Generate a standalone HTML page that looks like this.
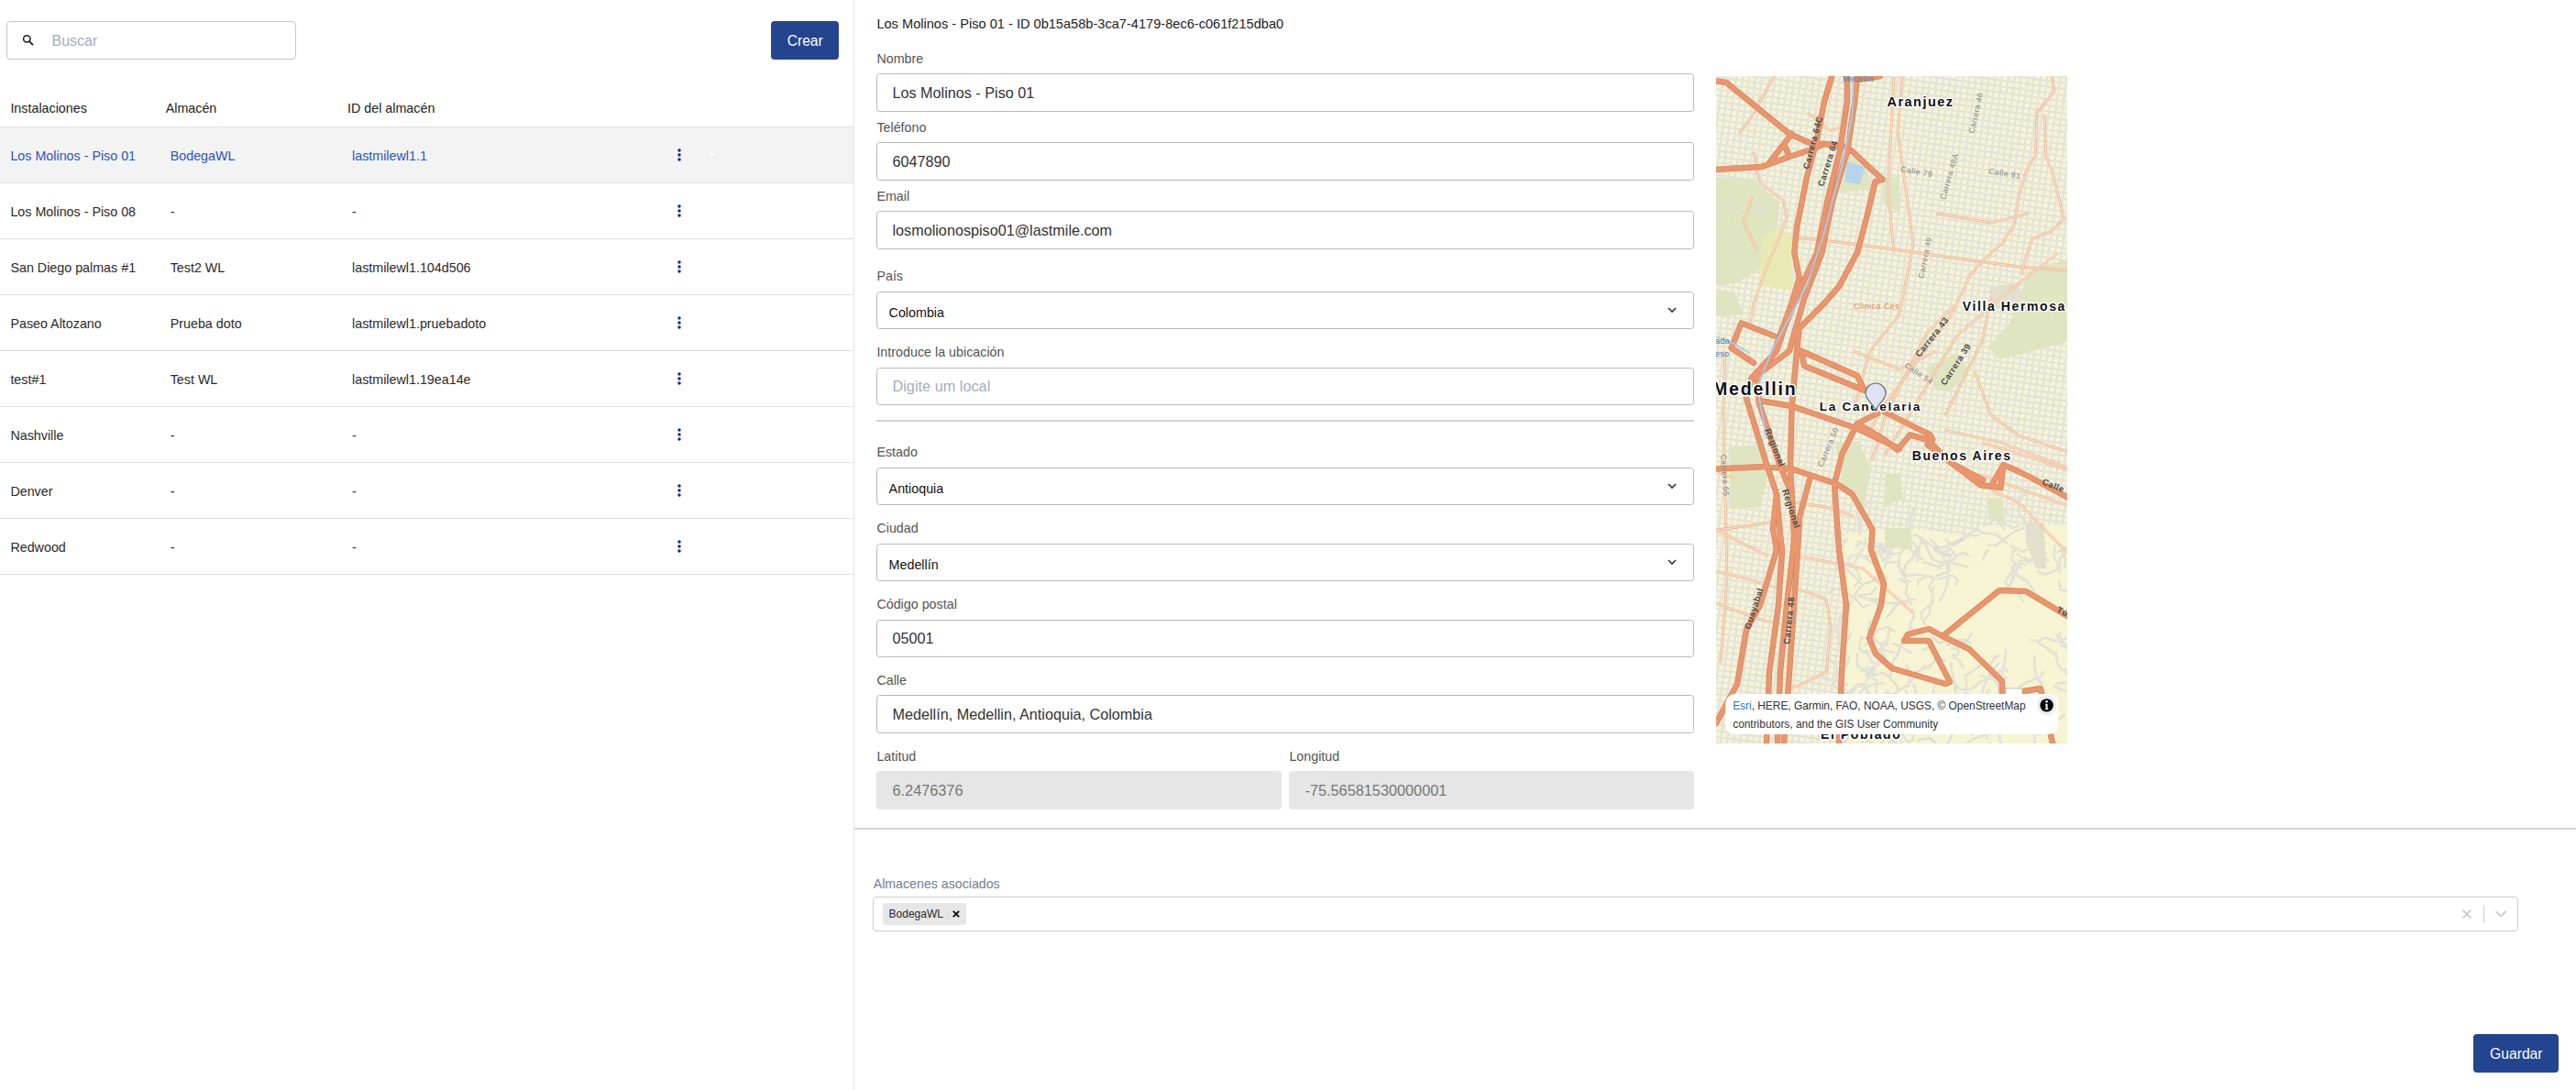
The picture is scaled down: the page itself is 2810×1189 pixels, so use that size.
<!DOCTYPE html>
<html><head><meta charset="utf-8"><style>
html,body{margin:0;padding:0;}
body{width:2810px;height:1189px;position:relative;overflow:hidden;background:#fff;font-family:"Liberation Sans", sans-serif;}
.t{position:absolute;white-space:nowrap;}
</style></head><body>
<div style="position:absolute;left:931px;top:0px;width:1px;height:1189px;background:#e4e4ec"></div>
<div style="position:absolute;left:7px;top:23px;width:316px;height:42px;box-sizing:border-box;border:1px solid #c6c6c6;border-radius:4px;background:#fff"></div>
<svg style="position:absolute;left:24px;top:37px" width="14" height="14" viewBox="0 0 14 14"><circle cx="5.3" cy="5.35" r="3.7" fill="none" stroke="#1a1d20" stroke-width="1.5"/><path d="M8.0 8.1 L11.6 11.6" stroke="#1a1d20" stroke-width="1.9" stroke-linecap="round"/></svg>
<div class="t" style="left:56.50px;top:36.65px;font-size:16px;line-height:16px;color:#a0aec0;font-weight:400;">Buscar</div>
<div style="position:absolute;left:841px;top:23px;width:74px;height:42px;background:#23448f;border-radius:4px"></div>
<div class="t" style="left:858.70px;top:37.19px;font-size:15.6px;line-height:15.6px;color:#ffffff;font-weight:400;">Crear</div>
<div class="t" style="left:11.40px;top:111.39px;font-size:14.3px;line-height:14.3px;color:#222222;font-weight:400;">Instalaciones</div>
<div class="t" style="left:180.70px;top:111.39px;font-size:14.3px;line-height:14.3px;color:#222222;font-weight:400;">Almacén</div>
<div class="t" style="left:379.00px;top:111.39px;font-size:14.3px;line-height:14.3px;color:#222222;font-weight:400;">ID del almacén</div>
<div style="position:absolute;left:0px;top:138px;width:931px;height:1px;background:#e0e0e0"></div>
<div style="position:absolute;left:0px;top:139px;width:931px;height:60px;background:#f3f3f3"></div>
<div class="t" style="left:11.40px;top:163.09px;font-size:14.3px;line-height:14.3px;color:#2a55b8;font-weight:400;">Los Molinos - Piso 01</div>
<div class="t" style="left:185.70px;top:163.09px;font-size:14.3px;line-height:14.3px;color:#2a55b8;font-weight:400;">BodegaWL</div>
<div class="t" style="left:384.00px;top:163.09px;font-size:14.3px;line-height:14.3px;color:#2a55b8;font-weight:400;">lastmilewl1.1</div>
<div style="position:absolute;left:0px;top:199px;width:931px;height:1px;background:#e0e0e0"></div>
<svg style="position:absolute;left:738px;top:161px" width="6" height="16" viewBox="0 0 6 16"><circle cx="3" cy="3" r="1.75" fill="#0e2c7e"/><circle cx="3" cy="8" r="1.75" fill="#0e2c7e"/><circle cx="3" cy="13" r="1.75" fill="#0e2c7e"/></svg>
<div class="t" style="left:11.40px;top:224.09px;font-size:14.3px;line-height:14.3px;color:#2a2a2a;font-weight:400;">Los Molinos - Piso 08</div>
<div class="t" style="left:185.70px;top:224.09px;font-size:14.3px;line-height:14.3px;color:#2a2a2a;font-weight:400;">-</div>
<div class="t" style="left:384.00px;top:224.09px;font-size:14.3px;line-height:14.3px;color:#2a2a2a;font-weight:400;">-</div>
<div style="position:absolute;left:0px;top:260px;width:931px;height:1px;background:#e0e0e0"></div>
<svg style="position:absolute;left:738px;top:222px" width="6" height="16" viewBox="0 0 6 16"><circle cx="3" cy="3" r="1.75" fill="#0e2c7e"/><circle cx="3" cy="8" r="1.75" fill="#0e2c7e"/><circle cx="3" cy="13" r="1.75" fill="#0e2c7e"/></svg>
<div class="t" style="left:11.40px;top:285.09px;font-size:14.3px;line-height:14.3px;color:#2a2a2a;font-weight:400;">San Diego palmas #1</div>
<div class="t" style="left:185.70px;top:285.09px;font-size:14.3px;line-height:14.3px;color:#2a2a2a;font-weight:400;">Test2 WL</div>
<div class="t" style="left:384.00px;top:285.09px;font-size:14.3px;line-height:14.3px;color:#2a2a2a;font-weight:400;">lastmilewl1.104d506</div>
<div style="position:absolute;left:0px;top:321px;width:931px;height:1px;background:#e0e0e0"></div>
<svg style="position:absolute;left:738px;top:283px" width="6" height="16" viewBox="0 0 6 16"><circle cx="3" cy="3" r="1.75" fill="#0e2c7e"/><circle cx="3" cy="8" r="1.75" fill="#0e2c7e"/><circle cx="3" cy="13" r="1.75" fill="#0e2c7e"/></svg>
<div class="t" style="left:11.40px;top:346.09px;font-size:14.3px;line-height:14.3px;color:#2a2a2a;font-weight:400;">Paseo Altozano</div>
<div class="t" style="left:185.70px;top:346.09px;font-size:14.3px;line-height:14.3px;color:#2a2a2a;font-weight:400;">Prueba doto</div>
<div class="t" style="left:384.00px;top:346.09px;font-size:14.3px;line-height:14.3px;color:#2a2a2a;font-weight:400;">lastmilewl1.pruebadoto</div>
<div style="position:absolute;left:0px;top:382px;width:931px;height:1px;background:#e0e0e0"></div>
<svg style="position:absolute;left:738px;top:344px" width="6" height="16" viewBox="0 0 6 16"><circle cx="3" cy="3" r="1.75" fill="#0e2c7e"/><circle cx="3" cy="8" r="1.75" fill="#0e2c7e"/><circle cx="3" cy="13" r="1.75" fill="#0e2c7e"/></svg>
<div class="t" style="left:11.40px;top:407.09px;font-size:14.3px;line-height:14.3px;color:#2a2a2a;font-weight:400;">test#1</div>
<div class="t" style="left:185.70px;top:407.09px;font-size:14.3px;line-height:14.3px;color:#2a2a2a;font-weight:400;">Test WL</div>
<div class="t" style="left:384.00px;top:407.09px;font-size:14.3px;line-height:14.3px;color:#2a2a2a;font-weight:400;">lastmilewl1.19ea14e</div>
<div style="position:absolute;left:0px;top:443px;width:931px;height:1px;background:#e0e0e0"></div>
<svg style="position:absolute;left:738px;top:405px" width="6" height="16" viewBox="0 0 6 16"><circle cx="3" cy="3" r="1.75" fill="#0e2c7e"/><circle cx="3" cy="8" r="1.75" fill="#0e2c7e"/><circle cx="3" cy="13" r="1.75" fill="#0e2c7e"/></svg>
<div class="t" style="left:11.40px;top:468.09px;font-size:14.3px;line-height:14.3px;color:#2a2a2a;font-weight:400;">Nashville</div>
<div class="t" style="left:185.70px;top:468.09px;font-size:14.3px;line-height:14.3px;color:#2a2a2a;font-weight:400;">-</div>
<div class="t" style="left:384.00px;top:468.09px;font-size:14.3px;line-height:14.3px;color:#2a2a2a;font-weight:400;">-</div>
<div style="position:absolute;left:0px;top:504px;width:931px;height:1px;background:#e0e0e0"></div>
<svg style="position:absolute;left:738px;top:466px" width="6" height="16" viewBox="0 0 6 16"><circle cx="3" cy="3" r="1.75" fill="#0e2c7e"/><circle cx="3" cy="8" r="1.75" fill="#0e2c7e"/><circle cx="3" cy="13" r="1.75" fill="#0e2c7e"/></svg>
<div class="t" style="left:11.40px;top:529.09px;font-size:14.3px;line-height:14.3px;color:#2a2a2a;font-weight:400;">Denver</div>
<div class="t" style="left:185.70px;top:529.09px;font-size:14.3px;line-height:14.3px;color:#2a2a2a;font-weight:400;">-</div>
<div class="t" style="left:384.00px;top:529.09px;font-size:14.3px;line-height:14.3px;color:#2a2a2a;font-weight:400;">-</div>
<div style="position:absolute;left:0px;top:565px;width:931px;height:1px;background:#e0e0e0"></div>
<svg style="position:absolute;left:738px;top:527px" width="6" height="16" viewBox="0 0 6 16"><circle cx="3" cy="3" r="1.75" fill="#0e2c7e"/><circle cx="3" cy="8" r="1.75" fill="#0e2c7e"/><circle cx="3" cy="13" r="1.75" fill="#0e2c7e"/></svg>
<div class="t" style="left:11.40px;top:590.09px;font-size:14.3px;line-height:14.3px;color:#2a2a2a;font-weight:400;">Redwood</div>
<div class="t" style="left:185.70px;top:590.09px;font-size:14.3px;line-height:14.3px;color:#2a2a2a;font-weight:400;">-</div>
<div class="t" style="left:384.00px;top:590.09px;font-size:14.3px;line-height:14.3px;color:#2a2a2a;font-weight:400;">-</div>
<div style="position:absolute;left:0px;top:626px;width:931px;height:1px;background:#e0e0e0"></div>
<svg style="position:absolute;left:738px;top:588px" width="6" height="16" viewBox="0 0 6 16"><circle cx="3" cy="3" r="1.75" fill="#0e2c7e"/><circle cx="3" cy="8" r="1.75" fill="#0e2c7e"/><circle cx="3" cy="13" r="1.75" fill="#0e2c7e"/></svg>
<svg style="position:absolute;left:772px;top:166px" width="10" height="6" viewBox="0 0 10 6"><path d="M0.8 1 L9 1 L4.9 5.2 Z" fill="#ffffff"/></svg>
<div class="t" style="left:956.40px;top:18.64px;font-size:14.6px;line-height:14.6px;color:#222222;font-weight:400;">Los Molinos - Piso 01 - ID 0b15a58b-3ca7-4179-8ec6-c061f215dba0</div>
<div class="t" style="left:956.40px;top:57.19px;font-size:14.3px;line-height:14.3px;color:#545454;font-weight:400;">Nombre</div>
<div style="position:absolute;left:956px;top:80.3px;width:892px;height:41.5px;box-sizing:border-box;border:1px solid #b9b9b9;border-radius:3.5px;background:#fff"></div>
<div class="t" style="left:973.50px;top:93.18px;font-size:16.2px;line-height:16.2px;color:#333333;font-weight:400;">Los Molinos - Piso 01</div>
<div class="t" style="left:956.40px;top:132.39px;font-size:14.3px;line-height:14.3px;color:#545454;font-weight:400;">Teléfono</div>
<div style="position:absolute;left:956px;top:155.3px;width:892px;height:41.5px;box-sizing:border-box;border:1px solid #b9b9b9;border-radius:3.5px;background:#fff"></div>
<div class="t" style="left:973.50px;top:168.18px;font-size:16.2px;line-height:16.2px;color:#333333;font-weight:400;">6047890</div>
<div class="t" style="left:956.40px;top:206.89px;font-size:14.3px;line-height:14.3px;color:#545454;font-weight:400;">Email</div>
<div style="position:absolute;left:956px;top:230.3px;width:892px;height:41.5px;box-sizing:border-box;border:1px solid #b9b9b9;border-radius:3.5px;background:#fff"></div>
<div class="t" style="left:973.50px;top:243.18px;font-size:16.2px;line-height:16.2px;color:#333333;font-weight:400;">losmolionospiso01@lastmile.com</div>
<div class="t" style="left:956.40px;top:293.89px;font-size:14.3px;line-height:14.3px;color:#545454;font-weight:400;">País</div>
<div style="position:absolute;left:956px;top:317.5px;width:892px;height:41.5px;box-sizing:border-box;border:1px solid #b9b9b9;border-radius:3.5px;background:#fff"></div>
<div class="t" style="left:969.60px;top:334.49px;font-size:14.3px;line-height:14.3px;color:#111111;font-weight:400;">Colombia</div>
<svg style="position:absolute;left:1818px;top:333.5px" width="12" height="8" viewBox="0 0 12 8"><path d="M2 2 L6 6 L10 2" fill="none" stroke="#333" stroke-width="1.6"/></svg>
<div class="t" style="left:956.40px;top:377.29px;font-size:14.3px;line-height:14.3px;color:#545454;font-weight:400;">Introduce la ubicación</div>
<div style="position:absolute;left:956px;top:400.6px;width:892px;height:41.5px;box-sizing:border-box;border:1px solid #b9b9b9;border-radius:3.5px;background:#fff"></div>
<div class="t" style="left:973.50px;top:413.40px;font-size:16.3px;line-height:16.3px;color:#a0aec0;font-weight:400;">Digite um local</div>
<div style="position:absolute;left:956px;top:458px;width:892px;height:2px;background:#d3d3d3"></div>
<div class="t" style="left:956.40px;top:486.29px;font-size:14.3px;line-height:14.3px;color:#545454;font-weight:400;">Estado</div>
<div style="position:absolute;left:956px;top:509.5px;width:892px;height:41.5px;box-sizing:border-box;border:1px solid #b9b9b9;border-radius:3.5px;background:#fff"></div>
<div class="t" style="left:969.60px;top:526.49px;font-size:14.3px;line-height:14.3px;color:#111111;font-weight:400;">Antioquia</div>
<svg style="position:absolute;left:1818px;top:525.5px" width="12" height="8" viewBox="0 0 12 8"><path d="M2 2 L6 6 L10 2" fill="none" stroke="#333" stroke-width="1.6"/></svg>
<div class="t" style="left:956.40px;top:569.19px;font-size:14.3px;line-height:14.3px;color:#545454;font-weight:400;">Ciudad</div>
<div style="position:absolute;left:956px;top:592.5px;width:892px;height:41.5px;box-sizing:border-box;border:1px solid #b9b9b9;border-radius:3.5px;background:#fff"></div>
<div class="t" style="left:969.60px;top:609.49px;font-size:14.3px;line-height:14.3px;color:#111111;font-weight:400;">Medellín</div>
<svg style="position:absolute;left:1818px;top:608.5px" width="12" height="8" viewBox="0 0 12 8"><path d="M2 2 L6 6 L10 2" fill="none" stroke="#333" stroke-width="1.6"/></svg>
<div class="t" style="left:956.40px;top:652.19px;font-size:14.3px;line-height:14.3px;color:#545454;font-weight:400;">Código postal</div>
<div style="position:absolute;left:956px;top:675.5px;width:892px;height:41.5px;box-sizing:border-box;border:1px solid #b9b9b9;border-radius:3.5px;background:#fff"></div>
<div class="t" style="left:973.50px;top:688.38px;font-size:16.2px;line-height:16.2px;color:#333333;font-weight:400;">05001</div>
<div class="t" style="left:956.40px;top:735.09px;font-size:14.3px;line-height:14.3px;color:#545454;font-weight:400;">Calle</div>
<div style="position:absolute;left:956px;top:758.4px;width:892px;height:41.5px;box-sizing:border-box;border:1px solid #b9b9b9;border-radius:3.5px;background:#fff"></div>
<div class="t" style="left:973.50px;top:771.28px;font-size:16.2px;line-height:16.2px;color:#333333;font-weight:400;">Medellín, Medellin, Antioquia, Colombia</div>
<div class="t" style="left:956.40px;top:817.89px;font-size:14.3px;line-height:14.3px;color:#545454;font-weight:400;">Latitud</div>
<div style="position:absolute;left:956px;top:841.3px;width:442px;height:41.5px;background:#e6e6e6;border-radius:4px"></div>
<div class="t" style="left:973.50px;top:854.10px;font-size:16.3px;line-height:16.3px;color:#767676;font-weight:400;">6.2476376</div>
<div class="t" style="left:1406.40px;top:817.89px;font-size:14.3px;line-height:14.3px;color:#545454;font-weight:400;">Longitud</div>
<div style="position:absolute;left:1406px;top:841.3px;width:442px;height:41.5px;background:#e6e6e6;border-radius:4px"></div>
<div class="t" style="left:1423.50px;top:854.10px;font-size:16.3px;line-height:16.3px;color:#767676;font-weight:400;">-75.56581530000001</div>
<div style="position:absolute;left:932px;top:903px;width:1878px;height:2px;background:#d2d2d2"></div>
<svg style="position:absolute;left:1872px;top:83px" width="383" height="728" viewBox="0 0 383 728">
<defs>
<pattern id="grid" width="7" height="6.6" patternUnits="userSpaceOnUse" patternTransform="rotate(8)">
<path d="M0 1 H7 M1 0 V6.6" stroke="#d8d8d0" stroke-width="2.0" fill="none"/>
<path d="M0 1 H7 M1 0 V6.6" stroke="#ecebe4" stroke-width="0.9" fill="none"/>
</pattern>
<pattern id="gridb" width="9" height="7.5" patternUnits="userSpaceOnUse" patternTransform="rotate(-28)">
<path d="M0 1 H9 M1 0 V7.5" stroke="#d6d5cc" stroke-width="2.1" fill="none"/>
<path d="M0 1 H9 M1 0 V7.5" stroke="#efeee7" stroke-width="0.8" fill="none"/>
</pattern>
<clipPath id="mc"><rect x="0" y="0" width="383" height="728"/></clipPath>
</defs>
<g clip-path="url(#mc)">
<rect x="0" y="0" width="383" height="728" fill="#f6f4d3"/>
<rect x="0" y="0" width="383" height="728" fill="url(#grid)"/>
<polygon points="140.0,500.0 200.0,492.0 260.0,500.0 300.0,490.0 383.0,490.0 383.0,728.0 140.0,728.0" fill="#f6f4d3"/>
<path d="M218.7 525.9 L219.7 519.0 L224.9 504.8 M192.2 510.5 L191.4 520.7 L185.9 525.4 L183.6 537.4 M370.3 627.4 L372.7 641.7 L377.3 647.6 L386.4 647.4 M338.3 533.0 L327.1 530.7 L322.7 535.6 L322.4 548.4 M212.8 679.1 L204.1 676.9 L194.9 674.7 L182.9 673.3 M157.8 611.8 L168.5 614.0 L176.3 604.0 L187.6 600.9 L195.0 606.3 M309.0 631.5 L303.0 635.0 L296.9 646.5 L304.0 657.7 L314.0 664.0 L319.7 672.7 M314.1 701.1 L311.0 712.8 L309.0 720.7 L312.5 733.7 L319.8 746.9 L323.6 753.6 M237.6 556.1 L236.2 564.8 L236.6 574.4 L224.5 584.3 L224.2 592.0 L228.9 598.9 M257.8 630.2 L265.7 638.4 L270.2 646.4 M170.5 694.5 L183.9 688.5 L194.0 696.5 M235.8 604.6 L236.5 612.7 L243.9 618.5 L249.4 616.1 M176.8 514.1 L179.3 521.8 L186.4 531.9 M372.2 633.3 L359.7 623.4 L350.8 617.3 M160.9 514.3 L154.3 525.5 L150.0 532.2 L140.4 531.4 L127.4 523.6 M296.2 511.7 L305.8 511.7 L314.8 504.8 L324.7 497.3 L337.6 492.2 M324.3 536.4 L320.2 543.7 L315.2 551.8 L318.7 557.1 L326.4 560.9 L335.7 573.3 M248.7 713.0 L252.0 706.8 L255.8 698.2 L261.6 683.5 L265.2 678.7 M296.3 688.6 L298.2 702.0 L299.7 709.7 L295.2 717.8 L280.4 723.2 L272.1 728.8 M370.1 662.5 L382.0 661.7 L394.4 659.9 L406.2 661.3 M255.3 713.1 L269.1 710.8 L275.6 713.3 L279.8 719.4 M379.7 536.4 L381.4 527.6 L376.3 516.8 M171.9 706.6 L159.6 713.7 L147.0 720.4 L140.4 717.4 L130.2 721.9 L118.0 715.6 M287.9 674.7 L296.3 684.9 L301.2 692.7 L306.9 702.8 M330.6 515.3 L324.6 517.5 L322.0 527.7 L333.6 537.1 M155.4 567.5 L165.5 570.6 L175.5 574.5 L177.3 587.4 M353.0 714.2 L347.3 719.0 L347.7 729.4 L355.0 733.5 M157.8 649.3 L169.6 645.6 L176.6 640.6 L177.4 630.0 M321.4 512.4 L334.3 518.7 L344.0 515.0 L352.9 512.1 M315.5 494.6 L308.8 487.4 L303.0 480.6 L305.8 474.0 L314.0 472.7 L319.1 477.3 M206.1 705.6 L201.3 719.3 L190.6 730.5 L184.8 740.3 M219.5 556.4 L220.4 549.8 L231.8 545.1 L238.2 547.4 M348.1 505.9 L340.9 491.6 L331.6 479.6 L329.3 473.6 L331.4 458.4 L339.6 455.8 M184.0 711.9 L173.5 708.6 L165.1 712.9 L165.5 721.3 M143.7 664.5 L135.8 661.5 L123.5 658.7 L113.1 651.7 M272.7 701.5 L287.9 705.6 L302.2 704.0 L313.6 708.6 L323.0 710.1 M153.2 520.9 L159.5 522.7 L167.2 528.8 L179.3 538.8 L187.1 549.1 M151.0 534.1 L157.8 548.2 L150.5 557.1 M199.4 719.8 L202.9 728.5 L211.6 730.1 L218.8 734.6 L221.1 741.1 M338.5 524.2 L331.1 529.4 L327.3 540.6 L322.0 553.0 L312.8 562.4 L302.9 561.3 M219.3 724.4 L233.4 722.1 L242.1 730.8 L245.3 744.6 M173.9 614.7 L165.7 606.1 L168.0 593.5 M147.6 521.7 L143.5 531.4 L147.4 536.2 M157.0 711.9 L163.5 710.2 L171.6 712.8 M158.1 553.2 L149.3 544.3 L138.3 535.0 L123.9 539.7 M209.8 501.1 L202.5 502.5 L192.8 511.8 L189.0 522.9 M143.0 504.4 L136.0 515.1 L135.2 526.2 M168.8 702.7 L164.7 707.3 L156.3 718.8 M205.3 539.9 L206.7 533.2 L212.9 527.2 L218.3 516.4 M167.4 576.9 L160.1 578.9 L151.2 569.6 L140.2 562.3 L131.1 558.6 L123.1 563.3 M218.9 570.5 L204.0 572.4 L196.1 578.2 L186.1 590.6 M151.7 514.2 L157.4 509.3 L166.9 513.5 L180.6 513.1 L188.7 519.4 M147.0 671.3 L140.6 671.9 L131.2 667.3 L125.1 656.4 M209.5 501.7 L212.7 492.0 L211.0 483.6 L215.5 472.0 M238.7 546.8 L232.2 557.4 L237.1 567.2 L233.9 578.3 L232.4 587.5 L225.1 594.7 M182.5 622.3 L184.1 633.9 L174.6 643.4 L169.1 651.9 L163.3 659.8 M222.2 504.8 L229.5 513.0 L235.4 526.4 L243.1 530.4 L253.0 529.1 M248.3 717.0 L245.6 707.2 L250.5 694.0 M375.3 606.6 L375.1 615.1 L381.1 619.7 L390.8 628.0 L388.2 641.0 L381.1 652.6 M251.1 621.3 L265.2 615.4 L274.2 615.0 L279.2 608.2 M294.6 656.3 L309.7 659.7 L317.2 655.5 M332.1 490.3 L323.3 492.9 L316.0 488.8 L306.4 482.5 L297.8 487.7 L291.4 489.0 M187.2 700.6 L175.2 696.3 L173.5 688.3 M148.3 570.5 L143.5 583.6 L134.7 590.3 L131.4 605.6 L134.8 619.4 L141.1 624.6 M371.3 608.0 L377.6 621.7 L389.5 622.6 L392.6 628.4 M145.7 631.9 L142.8 642.0 L136.3 648.4 M167.5 508.9 L182.2 513.2 L186.3 518.1 L189.2 527.4 M372.2 519.4 L384.1 512.7 L392.0 501.1 L387.1 489.1 M187.6 618.9 L175.8 628.1 L178.0 638.0 L171.1 649.8 L174.5 655.1 M155.2 709.0 L147.3 714.0 L140.5 728.0 M323.6 708.1 L315.7 710.6 L301.1 716.1 M259.9 710.9 L255.2 723.8 L249.8 731.4 L248.1 740.8 L243.0 745.3 M187.9 669.2 L184.3 679.4 L181.0 686.2 M243.7 515.0 L253.6 512.6 L263.0 525.1 M182.1 521.6 L168.5 516.7 L163.2 511.8 L163.1 502.9 M200.1 548.4 L208.6 553.6 L206.9 564.5 L213.5 577.0 M298.8 725.8 L298.8 734.2 L300.1 743.8 L294.3 749.8 L298.0 761.2 L294.3 768.3 M158.3 612.0 L155.7 624.4 L165.9 631.3 L170.3 639.7 L179.7 639.6 M150.7 728.0 L158.5 739.9 L165.4 746.7 L168.6 752.6 M147.6 608.0 L142.8 616.6 L135.5 626.6 L138.1 633.8 L136.9 643.8 L140.4 652.2 M241.2 695.7 L250.6 698.9 L265.9 700.4 L273.5 699.9 L277.3 694.1 M327.9 520.9 L339.8 530.2 L351.3 526.3 L360.2 519.8 M175.5 557.4 L167.9 565.3 L152.3 566.5 M188.0 520.1 L196.3 511.5 L202.4 508.3 L215.3 508.8 L222.3 519.0 L219.2 530.8 M254.9 624.6 L262.2 624.4 L272.9 616.7 L279.0 618.8 M276.6 670.3 L286.0 662.8 L296.4 656.3 L301.7 647.6 L308.7 640.0 M197.2 671.7 L209.0 664.1 L213.6 659.2 L217.5 650.4 L227.5 645.8 L233.9 645.5 M171.7 709.5 L178.5 718.1 L191.2 727.0 M173.1 694.0 L184.6 683.1 L195.6 672.2 M362.6 529.3 L355.8 522.7 L354.4 515.2 L360.4 508.9 M338.2 524.2 L331.5 529.6 L324.3 535.4 L326.0 543.0 L339.1 551.0 L347.5 563.4 M181.0 676.8 L185.8 685.1 L181.6 695.9 M281.0 700.0 L284.2 709.2 L290.0 717.0 L299.3 717.7 L304.3 711.1 L316.7 701.7 M212.0 612.8 L201.2 620.8 L198.8 629.4 L193.3 638.0 L191.7 644.3 M258.7 635.8 L264.6 628.3 L261.9 619.1 M194.5 628.9 L180.6 625.5 L175.5 628.9 L162.5 627.0 M249.6 505.2 L256.3 510.5 L267.2 504.6 L276.2 501.3 L286.6 501.3 M367.7 664.6 L377.8 669.7 L386.0 671.7 M154.2 675.4 L159.9 669.7 L169.5 664.2 L183.4 661.7 M213.0 501.5 L218.9 500.5 L229.7 508.6 L241.0 515.8 L248.4 519.4 L255.7 515.4 M149.4 569.9 L153.6 562.3 L159.8 553.9 L170.7 551.2 L179.3 542.3 M374.5 541.6 L374.9 526.6 L380.9 521.3 M178.7 707.8 L184.6 713.7 L182.1 725.8 L174.3 735.8 L163.9 733.2 L157.6 721.9 M316.1 625.7 L314.9 637.5 L312.9 645.0 L318.3 649.6 M291.1 528.5 L293.3 521.5 L297.2 516.3 M156.5 501.1 L155.7 485.6 L156.0 473.0 L167.0 465.0 L176.7 463.7 M199.9 538.4 L206.6 548.7 L212.8 551.9 M163.8 670.3 L169.2 677.0 L182.3 684.8 L193.9 677.8 L206.3 683.6 M209.9 667.5 L211.2 653.8 L207.6 641.2 M349.5 511.6 L352.7 500.8 L349.7 487.7 L340.6 485.1 M163.3 655.5 L173.2 643.5 L181.1 634.7 L179.9 620.6 L186.7 615.9 L189.2 600.7 M380.8 623.6 L390.4 626.6 L405.3 627.5 L414.1 615.5 L410.2 608.5 M204.0 704.5 L199.1 693.2 L203.6 687.4 L213.5 679.3 L219.3 676.6 L230.2 674.0 M252.5 654.0 L260.5 661.0 L259.9 669.3 L265.5 676.4 M310.9 690.8 L304.1 702.1 L297.3 708.8 L295.0 724.2 M202.9 717.3 L206.2 723.5 L217.2 734.8 L218.1 748.1 M245.7 536.7 L231.7 531.7 L225.8 530.2 M194.1 723.4 L200.5 733.6 L210.1 743.0 M279.5 668.3 L267.0 669.4 L258.5 660.4 L254.1 653.4 M184.1 519.6 L177.2 520.4 L164.0 524.6 L152.0 522.1 L142.5 526.1 M250.6 637.9 L242.0 634.5 L232.0 644.8 L225.0 643.5 M201.0 541.9 L199.9 534.9 L200.0 523.5 L205.7 514.0 M295.3 687.3 L287.4 680.4 L289.9 672.9 L295.2 658.6 L304.8 651.1 L312.8 648.3 M232.8 504.6 L241.8 513.6 L245.8 519.5 L254.6 524.3 L254.3 540.0 L239.7 545.6 M252.3 529.2 L264.1 532.8 L275.4 535.4 M194.9 719.4 L190.1 726.9 L185.5 732.5 L176.0 733.3 L169.7 727.3 L162.0 723.5 M243.5 534.2 L255.4 530.2 L263.3 522.8 L269.5 519.8 L276.1 523.3 M213.7 581.7 L216.2 588.6 L211.0 599.8 L215.0 604.3 L210.6 616.1 M200.8 514.2 L211.2 515.7 L216.6 521.6 L226.1 527.9 M288.1 653.8 L302.5 657.6 L310.9 669.3 M188.0 654.9 L182.1 650.8 L172.4 653.9 L162.8 649.0 L153.9 642.8 L154.1 629.8 M199.9 529.2 L190.9 530.9 L180.3 527.9 M212.1 600.9 L208.9 609.9 L205.0 614.7 M151.1 665.3 L162.0 665.5 L165.6 670.7 M314.5 638.8 L312.1 652.4 L307.6 666.8 L309.5 676.0 L314.3 680.5 M210.3 574.5 L201.6 574.8 L185.8 575.0 L172.8 570.2 L163.6 570.6 M212.7 629.6 L203.2 623.0 L192.3 618.7 M236.8 515.8 L247.5 522.4 L252.4 536.7 L253.0 548.9 L249.9 561.4 L244.0 572.8 M191.6 648.7 L189.0 656.1 L198.5 666.0 L195.6 678.3 M229.6 685.8 L236.6 682.2 L236.5 676.0 L238.2 664.3 L248.1 659.7 M266.9 686.3 L271.8 671.9 L273.0 665.9 L272.2 654.0 L285.4 645.2 L293.4 639.1 M164.8 643.4 L164.1 653.6 L175.5 659.3 L174.6 673.8 M193.0 518.9 L185.1 516.0 L180.3 509.7 L166.8 512.0 L153.1 507.1 M317.3 510.1 L305.7 500.0 L290.2 498.1 L285.3 494.4 L274.5 500.6 L267.9 499.0 M215.6 663.6 L218.0 672.4 L208.4 681.6 L203.2 687.3 L196.3 685.2 L194.9 677.7 M206.1 669.6 L214.0 683.2 L214.6 697.5 L219.7 708.4 L210.5 719.3 M244.1 701.4 L231.2 708.9 L222.6 707.1 L217.8 714.3 L213.3 725.3 L199.7 731.3 M150.3 688.3 L148.0 674.0 L155.1 663.2 L164.6 663.3 M160.7 621.8 L171.7 614.5 L179.3 619.4 L188.1 614.8 M312.1 710.4 L308.7 700.4 L295.1 696.8 M280.8 703.5 L289.3 695.1 L289.7 687.2 L281.1 677.4 L271.0 671.6 M237.8 613.1 L233.8 623.3 L224.5 626.2 M252.6 509.5 L252.2 520.6 L257.8 523.5 M380.7 696.1 L369.8 704.6 L359.4 716.0 L345.5 718.8 M374.1 550.5 L375.5 560.1 L381.6 562.0 L394.7 561.7 M258.3 691.3 L270.6 695.8 L278.0 690.3 L280.0 683.7 L290.7 680.9 L298.2 668.5 M230.1 546.0 L221.9 543.6 L206.9 544.7 L197.9 533.5 M151.4 677.2 L144.2 675.3 L134.2 663.6 L131.7 655.0 L130.8 641.4 L123.0 636.5 M202.5 519.5 L188.8 523.1 L177.8 513.1 L165.8 503.9 M334.1 527.4 L348.8 527.2 L353.2 533.1 M248.7 513.1 L259.1 511.6 L271.4 504.5 M256.0 639.5 L256.9 647.3 L260.2 661.8 L262.9 668.8 M241.6 548.7 L249.1 546.9 L258.0 544.6 L263.4 549.2 L261.5 555.5 M357.5 649.1 L353.7 655.1 L339.2 661.2 L331.9 665.8 L328.8 673.6 L327.6 683.7 M179.4 688.1 L182.7 693.3 L181.0 702.6 L184.8 707.2 M342.2 615.3 L352.3 616.0 L359.3 612.4 L369.8 616.3 L377.2 614.1 L391.5 613.3 M356.1 663.9 L348.9 654.2 L347.0 640.2 L347.5 632.2 M156.0 664.4 L147.8 669.2 L141.7 680.0 M369.8 511.5 L368.2 524.1 L373.6 534.4 L369.6 539.3 L358.8 543.9 L350.2 539.7 M366.5 720.6 L374.6 732.2 L372.1 741.1 L365.3 748.1 L358.8 749.3" fill="none" stroke="#d6d5cc" stroke-width="2.1" stroke-linejoin="round"/>
<path d="M218.7 525.9 L219.7 519.0 L224.9 504.8 M192.2 510.5 L191.4 520.7 L185.9 525.4 L183.6 537.4 M370.3 627.4 L372.7 641.7 L377.3 647.6 L386.4 647.4 M338.3 533.0 L327.1 530.7 L322.7 535.6 L322.4 548.4 M212.8 679.1 L204.1 676.9 L194.9 674.7 L182.9 673.3 M157.8 611.8 L168.5 614.0 L176.3 604.0 L187.6 600.9 L195.0 606.3 M309.0 631.5 L303.0 635.0 L296.9 646.5 L304.0 657.7 L314.0 664.0 L319.7 672.7 M314.1 701.1 L311.0 712.8 L309.0 720.7 L312.5 733.7 L319.8 746.9 L323.6 753.6 M237.6 556.1 L236.2 564.8 L236.6 574.4 L224.5 584.3 L224.2 592.0 L228.9 598.9 M257.8 630.2 L265.7 638.4 L270.2 646.4 M170.5 694.5 L183.9 688.5 L194.0 696.5 M235.8 604.6 L236.5 612.7 L243.9 618.5 L249.4 616.1 M176.8 514.1 L179.3 521.8 L186.4 531.9 M372.2 633.3 L359.7 623.4 L350.8 617.3 M160.9 514.3 L154.3 525.5 L150.0 532.2 L140.4 531.4 L127.4 523.6 M296.2 511.7 L305.8 511.7 L314.8 504.8 L324.7 497.3 L337.6 492.2 M324.3 536.4 L320.2 543.7 L315.2 551.8 L318.7 557.1 L326.4 560.9 L335.7 573.3 M248.7 713.0 L252.0 706.8 L255.8 698.2 L261.6 683.5 L265.2 678.7 M296.3 688.6 L298.2 702.0 L299.7 709.7 L295.2 717.8 L280.4 723.2 L272.1 728.8 M370.1 662.5 L382.0 661.7 L394.4 659.9 L406.2 661.3 M255.3 713.1 L269.1 710.8 L275.6 713.3 L279.8 719.4 M379.7 536.4 L381.4 527.6 L376.3 516.8 M171.9 706.6 L159.6 713.7 L147.0 720.4 L140.4 717.4 L130.2 721.9 L118.0 715.6 M287.9 674.7 L296.3 684.9 L301.2 692.7 L306.9 702.8 M330.6 515.3 L324.6 517.5 L322.0 527.7 L333.6 537.1 M155.4 567.5 L165.5 570.6 L175.5 574.5 L177.3 587.4 M353.0 714.2 L347.3 719.0 L347.7 729.4 L355.0 733.5 M157.8 649.3 L169.6 645.6 L176.6 640.6 L177.4 630.0 M321.4 512.4 L334.3 518.7 L344.0 515.0 L352.9 512.1 M315.5 494.6 L308.8 487.4 L303.0 480.6 L305.8 474.0 L314.0 472.7 L319.1 477.3 M206.1 705.6 L201.3 719.3 L190.6 730.5 L184.8 740.3 M219.5 556.4 L220.4 549.8 L231.8 545.1 L238.2 547.4 M348.1 505.9 L340.9 491.6 L331.6 479.6 L329.3 473.6 L331.4 458.4 L339.6 455.8 M184.0 711.9 L173.5 708.6 L165.1 712.9 L165.5 721.3 M143.7 664.5 L135.8 661.5 L123.5 658.7 L113.1 651.7 M272.7 701.5 L287.9 705.6 L302.2 704.0 L313.6 708.6 L323.0 710.1 M153.2 520.9 L159.5 522.7 L167.2 528.8 L179.3 538.8 L187.1 549.1 M151.0 534.1 L157.8 548.2 L150.5 557.1 M199.4 719.8 L202.9 728.5 L211.6 730.1 L218.8 734.6 L221.1 741.1 M338.5 524.2 L331.1 529.4 L327.3 540.6 L322.0 553.0 L312.8 562.4 L302.9 561.3 M219.3 724.4 L233.4 722.1 L242.1 730.8 L245.3 744.6 M173.9 614.7 L165.7 606.1 L168.0 593.5 M147.6 521.7 L143.5 531.4 L147.4 536.2 M157.0 711.9 L163.5 710.2 L171.6 712.8 M158.1 553.2 L149.3 544.3 L138.3 535.0 L123.9 539.7 M209.8 501.1 L202.5 502.5 L192.8 511.8 L189.0 522.9 M143.0 504.4 L136.0 515.1 L135.2 526.2 M168.8 702.7 L164.7 707.3 L156.3 718.8 M205.3 539.9 L206.7 533.2 L212.9 527.2 L218.3 516.4 M167.4 576.9 L160.1 578.9 L151.2 569.6 L140.2 562.3 L131.1 558.6 L123.1 563.3 M218.9 570.5 L204.0 572.4 L196.1 578.2 L186.1 590.6 M151.7 514.2 L157.4 509.3 L166.9 513.5 L180.6 513.1 L188.7 519.4 M147.0 671.3 L140.6 671.9 L131.2 667.3 L125.1 656.4 M209.5 501.7 L212.7 492.0 L211.0 483.6 L215.5 472.0 M238.7 546.8 L232.2 557.4 L237.1 567.2 L233.9 578.3 L232.4 587.5 L225.1 594.7 M182.5 622.3 L184.1 633.9 L174.6 643.4 L169.1 651.9 L163.3 659.8 M222.2 504.8 L229.5 513.0 L235.4 526.4 L243.1 530.4 L253.0 529.1 M248.3 717.0 L245.6 707.2 L250.5 694.0 M375.3 606.6 L375.1 615.1 L381.1 619.7 L390.8 628.0 L388.2 641.0 L381.1 652.6 M251.1 621.3 L265.2 615.4 L274.2 615.0 L279.2 608.2 M294.6 656.3 L309.7 659.7 L317.2 655.5 M332.1 490.3 L323.3 492.9 L316.0 488.8 L306.4 482.5 L297.8 487.7 L291.4 489.0 M187.2 700.6 L175.2 696.3 L173.5 688.3 M148.3 570.5 L143.5 583.6 L134.7 590.3 L131.4 605.6 L134.8 619.4 L141.1 624.6 M371.3 608.0 L377.6 621.7 L389.5 622.6 L392.6 628.4 M145.7 631.9 L142.8 642.0 L136.3 648.4 M167.5 508.9 L182.2 513.2 L186.3 518.1 L189.2 527.4 M372.2 519.4 L384.1 512.7 L392.0 501.1 L387.1 489.1 M187.6 618.9 L175.8 628.1 L178.0 638.0 L171.1 649.8 L174.5 655.1 M155.2 709.0 L147.3 714.0 L140.5 728.0 M323.6 708.1 L315.7 710.6 L301.1 716.1 M259.9 710.9 L255.2 723.8 L249.8 731.4 L248.1 740.8 L243.0 745.3 M187.9 669.2 L184.3 679.4 L181.0 686.2 M243.7 515.0 L253.6 512.6 L263.0 525.1 M182.1 521.6 L168.5 516.7 L163.2 511.8 L163.1 502.9 M200.1 548.4 L208.6 553.6 L206.9 564.5 L213.5 577.0 M298.8 725.8 L298.8 734.2 L300.1 743.8 L294.3 749.8 L298.0 761.2 L294.3 768.3 M158.3 612.0 L155.7 624.4 L165.9 631.3 L170.3 639.7 L179.7 639.6 M150.7 728.0 L158.5 739.9 L165.4 746.7 L168.6 752.6 M147.6 608.0 L142.8 616.6 L135.5 626.6 L138.1 633.8 L136.9 643.8 L140.4 652.2 M241.2 695.7 L250.6 698.9 L265.9 700.4 L273.5 699.9 L277.3 694.1 M327.9 520.9 L339.8 530.2 L351.3 526.3 L360.2 519.8 M175.5 557.4 L167.9 565.3 L152.3 566.5 M188.0 520.1 L196.3 511.5 L202.4 508.3 L215.3 508.8 L222.3 519.0 L219.2 530.8 M254.9 624.6 L262.2 624.4 L272.9 616.7 L279.0 618.8 M276.6 670.3 L286.0 662.8 L296.4 656.3 L301.7 647.6 L308.7 640.0 M197.2 671.7 L209.0 664.1 L213.6 659.2 L217.5 650.4 L227.5 645.8 L233.9 645.5 M171.7 709.5 L178.5 718.1 L191.2 727.0 M173.1 694.0 L184.6 683.1 L195.6 672.2 M362.6 529.3 L355.8 522.7 L354.4 515.2 L360.4 508.9 M338.2 524.2 L331.5 529.6 L324.3 535.4 L326.0 543.0 L339.1 551.0 L347.5 563.4 M181.0 676.8 L185.8 685.1 L181.6 695.9 M281.0 700.0 L284.2 709.2 L290.0 717.0 L299.3 717.7 L304.3 711.1 L316.7 701.7 M212.0 612.8 L201.2 620.8 L198.8 629.4 L193.3 638.0 L191.7 644.3 M258.7 635.8 L264.6 628.3 L261.9 619.1 M194.5 628.9 L180.6 625.5 L175.5 628.9 L162.5 627.0 M249.6 505.2 L256.3 510.5 L267.2 504.6 L276.2 501.3 L286.6 501.3 M367.7 664.6 L377.8 669.7 L386.0 671.7 M154.2 675.4 L159.9 669.7 L169.5 664.2 L183.4 661.7 M213.0 501.5 L218.9 500.5 L229.7 508.6 L241.0 515.8 L248.4 519.4 L255.7 515.4 M149.4 569.9 L153.6 562.3 L159.8 553.9 L170.7 551.2 L179.3 542.3 M374.5 541.6 L374.9 526.6 L380.9 521.3 M178.7 707.8 L184.6 713.7 L182.1 725.8 L174.3 735.8 L163.9 733.2 L157.6 721.9 M316.1 625.7 L314.9 637.5 L312.9 645.0 L318.3 649.6 M291.1 528.5 L293.3 521.5 L297.2 516.3 M156.5 501.1 L155.7 485.6 L156.0 473.0 L167.0 465.0 L176.7 463.7 M199.9 538.4 L206.6 548.7 L212.8 551.9 M163.8 670.3 L169.2 677.0 L182.3 684.8 L193.9 677.8 L206.3 683.6 M209.9 667.5 L211.2 653.8 L207.6 641.2 M349.5 511.6 L352.7 500.8 L349.7 487.7 L340.6 485.1 M163.3 655.5 L173.2 643.5 L181.1 634.7 L179.9 620.6 L186.7 615.9 L189.2 600.7 M380.8 623.6 L390.4 626.6 L405.3 627.5 L414.1 615.5 L410.2 608.5 M204.0 704.5 L199.1 693.2 L203.6 687.4 L213.5 679.3 L219.3 676.6 L230.2 674.0 M252.5 654.0 L260.5 661.0 L259.9 669.3 L265.5 676.4 M310.9 690.8 L304.1 702.1 L297.3 708.8 L295.0 724.2 M202.9 717.3 L206.2 723.5 L217.2 734.8 L218.1 748.1 M245.7 536.7 L231.7 531.7 L225.8 530.2 M194.1 723.4 L200.5 733.6 L210.1 743.0 M279.5 668.3 L267.0 669.4 L258.5 660.4 L254.1 653.4 M184.1 519.6 L177.2 520.4 L164.0 524.6 L152.0 522.1 L142.5 526.1 M250.6 637.9 L242.0 634.5 L232.0 644.8 L225.0 643.5 M201.0 541.9 L199.9 534.9 L200.0 523.5 L205.7 514.0 M295.3 687.3 L287.4 680.4 L289.9 672.9 L295.2 658.6 L304.8 651.1 L312.8 648.3 M232.8 504.6 L241.8 513.6 L245.8 519.5 L254.6 524.3 L254.3 540.0 L239.7 545.6 M252.3 529.2 L264.1 532.8 L275.4 535.4 M194.9 719.4 L190.1 726.9 L185.5 732.5 L176.0 733.3 L169.7 727.3 L162.0 723.5 M243.5 534.2 L255.4 530.2 L263.3 522.8 L269.5 519.8 L276.1 523.3 M213.7 581.7 L216.2 588.6 L211.0 599.8 L215.0 604.3 L210.6 616.1 M200.8 514.2 L211.2 515.7 L216.6 521.6 L226.1 527.9 M288.1 653.8 L302.5 657.6 L310.9 669.3 M188.0 654.9 L182.1 650.8 L172.4 653.9 L162.8 649.0 L153.9 642.8 L154.1 629.8 M199.9 529.2 L190.9 530.9 L180.3 527.9 M212.1 600.9 L208.9 609.9 L205.0 614.7 M151.1 665.3 L162.0 665.5 L165.6 670.7 M314.5 638.8 L312.1 652.4 L307.6 666.8 L309.5 676.0 L314.3 680.5 M210.3 574.5 L201.6 574.8 L185.8 575.0 L172.8 570.2 L163.6 570.6 M212.7 629.6 L203.2 623.0 L192.3 618.7 M236.8 515.8 L247.5 522.4 L252.4 536.7 L253.0 548.9 L249.9 561.4 L244.0 572.8 M191.6 648.7 L189.0 656.1 L198.5 666.0 L195.6 678.3 M229.6 685.8 L236.6 682.2 L236.5 676.0 L238.2 664.3 L248.1 659.7 M266.9 686.3 L271.8 671.9 L273.0 665.9 L272.2 654.0 L285.4 645.2 L293.4 639.1 M164.8 643.4 L164.1 653.6 L175.5 659.3 L174.6 673.8 M193.0 518.9 L185.1 516.0 L180.3 509.7 L166.8 512.0 L153.1 507.1 M317.3 510.1 L305.7 500.0 L290.2 498.1 L285.3 494.4 L274.5 500.6 L267.9 499.0 M215.6 663.6 L218.0 672.4 L208.4 681.6 L203.2 687.3 L196.3 685.2 L194.9 677.7 M206.1 669.6 L214.0 683.2 L214.6 697.5 L219.7 708.4 L210.5 719.3 M244.1 701.4 L231.2 708.9 L222.6 707.1 L217.8 714.3 L213.3 725.3 L199.7 731.3 M150.3 688.3 L148.0 674.0 L155.1 663.2 L164.6 663.3 M160.7 621.8 L171.7 614.5 L179.3 619.4 L188.1 614.8 M312.1 710.4 L308.7 700.4 L295.1 696.8 M280.8 703.5 L289.3 695.1 L289.7 687.2 L281.1 677.4 L271.0 671.6 M237.8 613.1 L233.8 623.3 L224.5 626.2 M252.6 509.5 L252.2 520.6 L257.8 523.5 M380.7 696.1 L369.8 704.6 L359.4 716.0 L345.5 718.8 M374.1 550.5 L375.5 560.1 L381.6 562.0 L394.7 561.7 M258.3 691.3 L270.6 695.8 L278.0 690.3 L280.0 683.7 L290.7 680.9 L298.2 668.5 M230.1 546.0 L221.9 543.6 L206.9 544.7 L197.9 533.5 M151.4 677.2 L144.2 675.3 L134.2 663.6 L131.7 655.0 L130.8 641.4 L123.0 636.5 M202.5 519.5 L188.8 523.1 L177.8 513.1 L165.8 503.9 M334.1 527.4 L348.8 527.2 L353.2 533.1 M248.7 513.1 L259.1 511.6 L271.4 504.5 M256.0 639.5 L256.9 647.3 L260.2 661.8 L262.9 668.8 M241.6 548.7 L249.1 546.9 L258.0 544.6 L263.4 549.2 L261.5 555.5 M357.5 649.1 L353.7 655.1 L339.2 661.2 L331.9 665.8 L328.8 673.6 L327.6 683.7 M179.4 688.1 L182.7 693.3 L181.0 702.6 L184.8 707.2 M342.2 615.3 L352.3 616.0 L359.3 612.4 L369.8 616.3 L377.2 614.1 L391.5 613.3 M356.1 663.9 L348.9 654.2 L347.0 640.2 L347.5 632.2 M156.0 664.4 L147.8 669.2 L141.7 680.0 M369.8 511.5 L368.2 524.1 L373.6 534.4 L369.6 539.3 L358.8 543.9 L350.2 539.7 M366.5 720.6 L374.6 732.2 L372.1 741.1 L365.3 748.1 L358.8 749.3" fill="none" stroke="#efeee7" stroke-width="0.8" stroke-linejoin="round"/>
<polygon points="0.0,110.0 41.0,113.0 69.0,138.0 66.0,176.0 50.0,209.0 22.0,226.0 0.0,228.0" fill="#dfe4c1"/>
<polygon points="137.6,88.0 165.0,91.0 168.0,124.0 135.0,126.5" fill="#dfe4c1"/>
<polygon points="181.6,110.0 200.0,110.0 200.0,148.6 181.6,137.6" fill="#dfe4c1"/>
<polygon points="342.0,212.0 383.0,200.0 383.0,290.0 309.0,309.0 297.0,295.0 320.0,270.0" fill="#dfe4c1"/>
<polygon points="230.0,318.0 262.0,302.0 275.0,320.0 255.0,345.0 238.0,340.0" fill="#dfe4c1"/>
<polygon points="15.0,405.0 50.0,402.0 56.0,440.0 48.0,470.0 15.0,472.0" fill="#dfe4c1"/>
<polygon points="130.0,400.0 155.0,398.0 170.0,430.0 160.0,470.0 140.0,455.0" fill="#dfe4c1"/>
<polygon points="296.8,460.0 313.3,460.0 313.3,484.8 296.8,482.0" fill="#dfe4c1"/>
<polygon points="184.0,435.0 200.5,432.5 203.3,460.0 184.0,471.0" fill="#dfe4c1"/>
<polygon points="184.0,493.0 211.5,493.0 214.3,515.0 184.0,515.0" fill="#dfe4c1"/>
<polygon points="0.0,232.0 20.0,236.0 30.0,260.0 0.0,262.0" fill="#dfe4c1"/>
<polyline points="2.0,140.0 15.0,138.0 30.0,150.0 30.0,165.0 16.0,185.0 22.0,195.0" fill="none" stroke="#cfd4bc" stroke-width="1.8"/>
<polyline points="2.0,140.0 15.0,138.0 30.0,150.0 30.0,165.0 16.0,185.0 22.0,195.0" fill="none" stroke="#f4f4ee" stroke-width="0.8"/>
<polyline points="16.0,138.0 22.0,160.0 12.0,175.0 3.0,178.0" fill="none" stroke="#cfd4bc" stroke-width="1.8"/>
<polyline points="16.0,138.0 22.0,160.0 12.0,175.0 3.0,178.0" fill="none" stroke="#f4f4ee" stroke-width="0.8"/>
<polyline points="30.0,150.0 45.0,142.0 55.0,150.0" fill="none" stroke="#cfd4bc" stroke-width="1.8"/>
<polyline points="30.0,150.0 45.0,142.0 55.0,150.0" fill="none" stroke="#f4f4ee" stroke-width="0.8"/>
<polyline points="40.0,195.0 55.0,185.0 66.0,190.0" fill="none" stroke="#cfd4bc" stroke-width="1.8"/>
<polyline points="40.0,195.0 55.0,185.0 66.0,190.0" fill="none" stroke="#f4f4ee" stroke-width="0.8"/>
<polygon points="49.5,176.0 68.8,165.0 82.5,176.0 82.5,233.8 46.8,228.3" fill="#e9e9b4"/>
<polygon points="338.0,487.6 357.3,487.6 360.0,537.0 349.0,537.0 338.0,509.6" fill="#e2e0cc"/>
<polygon points="298.0,230.0 330.0,225.0 335.0,250.0 300.0,255.0" fill="#e2e0cc"/>
<polygon points="143.0,93.5 162.3,99.0 156.8,118.3 140.3,115.5" fill="#b8d3ee"/>
<polyline points="63.0,0.0 41.0,41.0 25.0,63.0" fill="none" stroke="#f0b894" stroke-width="2.8" stroke-linejoin="round"/>
<polyline points="63.0,0.0 41.0,41.0 25.0,63.0" fill="none" stroke="#fbe5d2" stroke-width="1.1" stroke-linejoin="round"/>
<polyline points="41.0,82.0 47.0,115.0 74.0,137.0 77.0,154.0 69.0,176.0 55.0,209.0 41.0,248.0 36.0,275.0" fill="none" stroke="#f0b894" stroke-width="2.8" stroke-linejoin="round"/>
<polyline points="41.0,82.0 47.0,115.0 74.0,137.0 77.0,154.0 69.0,176.0 55.0,209.0 41.0,248.0 36.0,275.0" fill="none" stroke="#fbe5d2" stroke-width="1.1" stroke-linejoin="round"/>
<polyline points="82.5,176.0 115.5,179.0 154.0,184.0 200.0,190.0 270.0,200.0 330.0,208.0 383.0,212.0" fill="none" stroke="#f0b894" stroke-width="2.8" stroke-linejoin="round"/>
<polyline points="82.5,176.0 115.5,179.0 154.0,184.0 200.0,190.0 270.0,200.0 330.0,208.0 383.0,212.0" fill="none" stroke="#fbe5d2" stroke-width="1.1" stroke-linejoin="round"/>
<polyline points="203.0,0.0 198.0,60.0 205.0,110.0 215.0,182.0 200.0,260.0 168.0,300.0 150.0,364.0" fill="none" stroke="#f0b894" stroke-width="2.8" stroke-linejoin="round"/>
<polyline points="203.0,0.0 198.0,60.0 205.0,110.0 215.0,182.0 200.0,260.0 168.0,300.0 150.0,364.0" fill="none" stroke="#fbe5d2" stroke-width="1.1" stroke-linejoin="round"/>
<polyline points="366.0,0.0 369.0,16.7 350.0,40.0 348.3,86.5 338.4,103.0 330.1,132.7 325.2,162.4 312.0,182.2 290.5,202.0 277.3,216.9 256.0,262.0 222.0,307.0 190.0,350.0 165.0,390.0" fill="none" stroke="#f0b894" stroke-width="2.8" stroke-linejoin="round"/>
<polyline points="366.0,0.0 369.0,16.7 350.0,40.0 348.3,86.5 338.4,103.0 330.1,132.7 325.2,162.4 312.0,182.2 290.5,202.0 277.3,216.9 256.0,262.0 222.0,307.0 190.0,350.0 165.0,390.0" fill="none" stroke="#fbe5d2" stroke-width="1.1" stroke-linejoin="round"/>
<polyline points="358.2,42.0 359.8,88.2 366.4,103.0 379.6,155.8 366.4,169.0 345.0,177.3 336.7,202.0 333.4,216.9" fill="none" stroke="#f0b894" stroke-width="2.8" stroke-linejoin="round"/>
<polyline points="358.2,42.0 359.8,88.2 366.4,103.0 379.6,155.8 366.4,169.0 345.0,177.3 336.7,202.0 333.4,216.9" fill="none" stroke="#fbe5d2" stroke-width="1.1" stroke-linejoin="round"/>
<polyline points="260.0,250.0 230.0,280.0 210.0,320.0 185.0,370.0 170.0,420.0" fill="none" stroke="#f0b894" stroke-width="2.8" stroke-linejoin="round"/>
<polyline points="260.0,250.0 230.0,280.0 210.0,320.0 185.0,370.0 170.0,420.0" fill="none" stroke="#fbe5d2" stroke-width="1.1" stroke-linejoin="round"/>
<polyline points="300.0,240.0 290.0,290.0 270.0,330.0 250.0,370.0" fill="none" stroke="#f0b894" stroke-width="2.8" stroke-linejoin="round"/>
<polyline points="300.0,240.0 290.0,290.0 270.0,330.0 250.0,370.0" fill="none" stroke="#fbe5d2" stroke-width="1.1" stroke-linejoin="round"/>
<polyline points="0.0,540.0 40.0,550.0 70.0,560.0" fill="none" stroke="#f0b894" stroke-width="2.8" stroke-linejoin="round"/>
<polyline points="0.0,540.0 40.0,550.0 70.0,560.0" fill="none" stroke="#fbe5d2" stroke-width="1.1" stroke-linejoin="round"/>
<polyline points="0.0,575.0 40.0,590.0 75.0,600.0" fill="none" stroke="#f0b894" stroke-width="2.8" stroke-linejoin="round"/>
<polyline points="0.0,575.0 40.0,590.0 75.0,600.0" fill="none" stroke="#fbe5d2" stroke-width="1.1" stroke-linejoin="round"/>
<polyline points="90.0,560.0 120.0,570.0 125.0,600.0 120.0,650.0 90.0,665.0 75.0,670.0" fill="none" stroke="#f0b894" stroke-width="2.8" stroke-linejoin="round"/>
<polyline points="90.0,560.0 120.0,570.0 125.0,600.0 120.0,650.0 90.0,665.0 75.0,670.0" fill="none" stroke="#fbe5d2" stroke-width="1.1" stroke-linejoin="round"/>
<polyline points="290.0,400.0 340.0,415.0 383.0,430.0" fill="none" stroke="#f0b894" stroke-width="2.8" stroke-linejoin="round"/>
<polyline points="290.0,400.0 340.0,415.0 383.0,430.0" fill="none" stroke="#fbe5d2" stroke-width="1.1" stroke-linejoin="round"/>
<polyline points="282.0,322.0 300.0,370.0 330.0,392.0 383.0,410.0" fill="none" stroke="#f0b894" stroke-width="2.8" stroke-linejoin="round"/>
<polyline points="282.0,322.0 300.0,370.0 330.0,392.0 383.0,410.0" fill="none" stroke="#fbe5d2" stroke-width="1.1" stroke-linejoin="round"/>
<polyline points="300.0,452.0 330.0,465.0 383.0,520.0" fill="none" stroke="#f0b894" stroke-width="2.8" stroke-linejoin="round"/>
<polyline points="300.0,452.0 330.0,465.0 383.0,520.0" fill="none" stroke="#fbe5d2" stroke-width="1.1" stroke-linejoin="round"/>
<polyline points="10.0,300.0 8.0,364.0 10.0,450.0 12.0,546.0 5.0,640.0" fill="none" stroke="#f0b894" stroke-width="2.8" stroke-linejoin="round"/>
<polyline points="10.0,300.0 8.0,364.0 10.0,450.0 12.0,546.0 5.0,640.0" fill="none" stroke="#fbe5d2" stroke-width="1.1" stroke-linejoin="round"/>
<polyline points="0.0,430.0 20.0,440.0" fill="none" stroke="#f0b894" stroke-width="2.8" stroke-linejoin="round"/>
<polyline points="0.0,430.0 20.0,440.0" fill="none" stroke="#fbe5d2" stroke-width="1.1" stroke-linejoin="round"/>
<polyline points="86.0,465.0 120.0,470.0 150.0,480.0" fill="none" stroke="#f0b894" stroke-width="2.8" stroke-linejoin="round"/>
<polyline points="86.0,465.0 120.0,470.0 150.0,480.0" fill="none" stroke="#fbe5d2" stroke-width="1.1" stroke-linejoin="round"/>
<polyline points="0.0,495.0 40.0,490.0 70.0,485.0" fill="none" stroke="#f0b894" stroke-width="2.8" stroke-linejoin="round"/>
<polyline points="0.0,495.0 40.0,490.0 70.0,485.0" fill="none" stroke="#fbe5d2" stroke-width="1.1" stroke-linejoin="round"/>
<polyline points="184.0,413.5 263.0,283.0 311.0,241.5 373.0,193.0" fill="none" stroke="#f0b894" stroke-width="2.8" stroke-linejoin="round"/>
<polyline points="184.0,413.5 263.0,283.0 311.0,241.5 373.0,193.0" fill="none" stroke="#fbe5d2" stroke-width="1.1" stroke-linejoin="round"/>
<polyline points="194.0,1.0 187.5,124.6 194.0,193.0" fill="none" stroke="#f0b894" stroke-width="2.8" stroke-linejoin="round"/>
<polyline points="194.0,1.0 187.5,124.6 194.0,193.0" fill="none" stroke="#fbe5d2" stroke-width="1.1" stroke-linejoin="round"/>
<polyline points="1.8,496.0 29.0,510.0 57.0,523.6" fill="none" stroke="#f0b894" stroke-width="2.8" stroke-linejoin="round"/>
<polyline points="1.8,496.0 29.0,510.0 57.0,523.6" fill="none" stroke="#fbe5d2" stroke-width="1.1" stroke-linejoin="round"/>
<polyline points="91.0,523.6 160.0,537.0 215.0,585.5" fill="none" stroke="#f0b894" stroke-width="2.8" stroke-linejoin="round"/>
<polyline points="91.0,523.6 160.0,537.0 215.0,585.5" fill="none" stroke="#fbe5d2" stroke-width="1.1" stroke-linejoin="round"/>
<polyline points="284.0,434.0 383.5,468.5" fill="none" stroke="#f0b894" stroke-width="2.8" stroke-linejoin="round"/>
<polyline points="284.0,434.0 383.5,468.5" fill="none" stroke="#fbe5d2" stroke-width="1.1" stroke-linejoin="round"/>
<polyline points="249.0,386.0 311.0,400.0 383.5,427.0" fill="none" stroke="#f0b894" stroke-width="2.8" stroke-linejoin="round"/>
<polyline points="249.0,386.0 311.0,400.0 383.5,427.0" fill="none" stroke="#fbe5d2" stroke-width="1.1" stroke-linejoin="round"/>
<polyline points="40.0,130.0 30.0,160.0 45.0,190.0" fill="none" stroke="#f0b894" stroke-width="2.8" stroke-linejoin="round"/>
<polyline points="40.0,130.0 30.0,160.0 45.0,190.0" fill="none" stroke="#fbe5d2" stroke-width="1.1" stroke-linejoin="round"/>
<polyline points="100.0,40.0 125.0,60.0 150.0,50.0" fill="none" stroke="#f0b894" stroke-width="2.8" stroke-linejoin="round"/>
<polyline points="100.0,40.0 125.0,60.0 150.0,50.0" fill="none" stroke="#fbe5d2" stroke-width="1.1" stroke-linejoin="round"/>
<polyline points="240.0,150.0 300.0,160.0 340.0,150.0" fill="none" stroke="#f0b894" stroke-width="2.8" stroke-linejoin="round"/>
<polyline points="240.0,150.0 300.0,160.0 340.0,150.0" fill="none" stroke="#fbe5d2" stroke-width="1.1" stroke-linejoin="round"/>
<polyline points="150.0,300.0 200.0,320.0 240.0,300.0" fill="none" stroke="#f0b894" stroke-width="2.8" stroke-linejoin="round"/>
<polyline points="150.0,300.0 200.0,320.0 240.0,300.0" fill="none" stroke="#fbe5d2" stroke-width="1.1" stroke-linejoin="round"/>
<path d="M0.0 5.5 L11.0 7.0 L80.0 63.0 L104.5 74.0 L118.0 74.0 L143.0 77.0 L181.6 112.8 M0.0 102.0 L49.5 99.0 L80.0 88.0 L104.5 80.0 L118.0 74.0 M57.8 95.0 L82.5 63.0 M74.3 74.3 L79.8 88.0 M154.0 4.0 L179.0 0.0 M126.5 0.0 L118.0 27.5 L110.0 69.0 L99.0 110.0 L88.0 165.0 L85.3 192.6 L90.8 220.0 L82.5 247.6 L63.3 300.0 M143.0 0.0 L143.0 27.5 L134.8 82.5 L121.0 137.6 L110.0 192.6 L90.8 233.8 L74.3 275.0 L66.0 300.0 L38.5 329.5 L33.0 351.5 L55.0 423.0 L66.0 456.0 L70.0 500.0 L72.0 517.0 L68.0 577.0 L58.0 650.0 L55.0 728.0 M154.0 0.0 L151.3 27.5 L143.0 82.5 L126.5 137.6 L115.5 192.6 L96.3 242.0 L79.8 300.0 L44.0 327.0 L47.0 357.0 L69.0 423.0 L82.5 456.0 L85.0 500.0 L84.0 517.0 L77.0 577.0 L70.0 650.0 L67.0 728.0 M181.6 112.8 L173.3 115.5 L165.0 151.3 L154.0 192.6 L134.8 228.3 L118.3 247.6 L110.0 255.8 L90.8 275.0 L88.0 300.0 L82.5 362.5 L81.0 426.0 L84.0 480.0 L89.0 517.0 L85.0 577.0 L80.0 650.0 L74.0 728.0 M102.0 440.0 L91.0 481.0 L89.0 517.0 M66.0 456.0 L62.0 494.0 L66.0 517.0 L48.0 577.0 L33.0 604.0 L23.0 663.0 L0.0 706.0 M27.5 269.6 L63.3 283.4 M27.5 269.6 L16.5 296.5 L41.0 313.0 M91.0 299.0 L154.0 327.0 L162.0 343.0 L96.0 316.0 L93.5 302.0 M47.0 354.0 L82.5 360.0 L154.0 384.5 L200.0 406.5 M176.0 368.0 L154.0 379.0 L137.5 412.0 L129.0 445.0 L134.0 517.0 L142.0 577.0 L137.0 650.0 L134.0 728.0 M0.0 428.5 L55.0 426.0 L82.5 428.5 L132.0 445.0 L148.5 456.0 L170.5 494.5 L169.0 517.0 L183.0 554.0 L180.0 577.0 L167.0 613.0 L174.0 630.0 L192.0 646.0 M184.0 366.5 L233.5 391.3 L236.3 396.8 L230.8 402.3 L288.5 446.3 L310.5 449.0 L313.3 424.3 L327.0 429.8 L343.6 438.0 L384.0 460.0 M154.0 379.0 L184.0 396.8 L197.8 407.8 L211.5 391.3 L230.8 396.8 L255.5 421.5 L291.3 440.8 M313.3 424.3 L300.0 447.0 M192.0 646.0 L250.0 663.0 L255.0 661.0 L232.0 616.0 L205.0 616.0 L209.0 609.0 L232.0 603.0 L247.0 611.0 L276.0 625.0 L312.0 660.0 L312.0 690.0 M247.0 611.0 L309.0 561.0 L338.0 562.0 L384.0 589.4 M336.0 671.0 L354.0 668.0 L367.0 728.0" fill="none" stroke="#d98761" stroke-width="6.4" stroke-linejoin="round" stroke-linecap="round"/>
<path d="M0.0 5.5 L11.0 7.0 L80.0 63.0 L104.5 74.0 L118.0 74.0 L143.0 77.0 L181.6 112.8 M0.0 102.0 L49.5 99.0 L80.0 88.0 L104.5 80.0 L118.0 74.0 M57.8 95.0 L82.5 63.0 M74.3 74.3 L79.8 88.0 M154.0 4.0 L179.0 0.0 M126.5 0.0 L118.0 27.5 L110.0 69.0 L99.0 110.0 L88.0 165.0 L85.3 192.6 L90.8 220.0 L82.5 247.6 L63.3 300.0 M143.0 0.0 L143.0 27.5 L134.8 82.5 L121.0 137.6 L110.0 192.6 L90.8 233.8 L74.3 275.0 L66.0 300.0 L38.5 329.5 L33.0 351.5 L55.0 423.0 L66.0 456.0 L70.0 500.0 L72.0 517.0 L68.0 577.0 L58.0 650.0 L55.0 728.0 M154.0 0.0 L151.3 27.5 L143.0 82.5 L126.5 137.6 L115.5 192.6 L96.3 242.0 L79.8 300.0 L44.0 327.0 L47.0 357.0 L69.0 423.0 L82.5 456.0 L85.0 500.0 L84.0 517.0 L77.0 577.0 L70.0 650.0 L67.0 728.0 M181.6 112.8 L173.3 115.5 L165.0 151.3 L154.0 192.6 L134.8 228.3 L118.3 247.6 L110.0 255.8 L90.8 275.0 L88.0 300.0 L82.5 362.5 L81.0 426.0 L84.0 480.0 L89.0 517.0 L85.0 577.0 L80.0 650.0 L74.0 728.0 M102.0 440.0 L91.0 481.0 L89.0 517.0 M66.0 456.0 L62.0 494.0 L66.0 517.0 L48.0 577.0 L33.0 604.0 L23.0 663.0 L0.0 706.0 M27.5 269.6 L63.3 283.4 M27.5 269.6 L16.5 296.5 L41.0 313.0 M91.0 299.0 L154.0 327.0 L162.0 343.0 L96.0 316.0 L93.5 302.0 M47.0 354.0 L82.5 360.0 L154.0 384.5 L200.0 406.5 M176.0 368.0 L154.0 379.0 L137.5 412.0 L129.0 445.0 L134.0 517.0 L142.0 577.0 L137.0 650.0 L134.0 728.0 M0.0 428.5 L55.0 426.0 L82.5 428.5 L132.0 445.0 L148.5 456.0 L170.5 494.5 L169.0 517.0 L183.0 554.0 L180.0 577.0 L167.0 613.0 L174.0 630.0 L192.0 646.0 M184.0 366.5 L233.5 391.3 L236.3 396.8 L230.8 402.3 L288.5 446.3 L310.5 449.0 L313.3 424.3 L327.0 429.8 L343.6 438.0 L384.0 460.0 M154.0 379.0 L184.0 396.8 L197.8 407.8 L211.5 391.3 L230.8 396.8 L255.5 421.5 L291.3 440.8 M313.3 424.3 L300.0 447.0 M192.0 646.0 L250.0 663.0 L255.0 661.0 L232.0 616.0 L205.0 616.0 L209.0 609.0 L232.0 603.0 L247.0 611.0 L276.0 625.0 L312.0 660.0 L312.0 690.0 M247.0 611.0 L309.0 561.0 L338.0 562.0 L384.0 589.4 M336.0 671.0 L354.0 668.0 L367.0 728.0" fill="none" stroke="#e9966e" stroke-width="4.8" stroke-linejoin="round" stroke-linecap="round"/>
<polyline points="150.0,0.0 148.6,41.3 137.6,96.3 115.5,178.8 99.0,228.3 60.5,300.0 45.0,340.0 55.0,395.0" fill="none" stroke="#aac8ec" stroke-width="1.8"/>
<polyline points="0.0,284.0 20.0,292.0 36.0,302.0" fill="none" stroke="#aac8ec" stroke-width="1.5"/>
<text x="186.6" y="33.4" font-family="Liberation Sans, sans-serif" font-size="14.5" font-weight="700" fill="#111" letter-spacing="1.45" stroke="#ffffff" stroke-width="3" paint-order="stroke" stroke-linejoin="round">Aranjuez</text>
<text x="268.8" y="255.5" font-family="Liberation Sans, sans-serif" font-size="14" font-weight="700" fill="#111" letter-spacing="1.6" stroke="#ffffff" stroke-width="3" paint-order="stroke" stroke-linejoin="round">Villa Hermosa</text>
<text x="-4" y="348.2" font-family="Liberation Sans, sans-serif" font-size="19.5" font-weight="700" fill="#111" letter-spacing="1.8" stroke="#ffffff" stroke-width="3" paint-order="stroke" stroke-linejoin="round">Medellin</text>
<text x="112.8" y="365.3" font-family="Liberation Sans, sans-serif" font-size="13.6" font-weight="700" fill="#111" letter-spacing="1.7" stroke="#ffffff" stroke-width="3" paint-order="stroke" stroke-linejoin="round">La Candelaria</text>
<text x="213.7" y="419" font-family="Liberation Sans, sans-serif" font-size="14" font-weight="700" fill="#111" letter-spacing="1.6" stroke="#ffffff" stroke-width="3" paint-order="stroke" stroke-linejoin="round">Buenos Aires</text>
<text x="114" y="723" font-family="Liberation Sans, sans-serif" font-size="14" font-weight="700" fill="#111" letter-spacing="1.6" stroke="#ffffff" stroke-width="3" paint-order="stroke" stroke-linejoin="round">El Poblado</text>
<text x="201" y="104" transform="rotate(10 201 104)" font-family="Liberation Sans, sans-serif" font-size="8.5" font-weight="400" fill="#858580" letter-spacing="0.5">Calle 79</text>
<text x="297" y="106" transform="rotate(10 297 106)" font-family="Liberation Sans, sans-serif" font-size="8.5" font-weight="400" fill="#858580" letter-spacing="0.5">Calle 81</text>
<text x="250" y="135" transform="rotate(-74 250 135)" font-family="Liberation Sans, sans-serif" font-size="8.5" font-weight="400" fill="#858580" letter-spacing="0.5">Carrera 48A</text>
<text x="281" y="63" transform="rotate(-77 281 63)" font-family="Liberation Sans, sans-serif" font-size="8.5" font-weight="400" fill="#858580" letter-spacing="0.5">Carrera 46</text>
<text x="226" y="221" transform="rotate(-78 226 221)" font-family="Liberation Sans, sans-serif" font-size="8.5" font-weight="400" fill="#858580" letter-spacing="0.5">Carrera 49</text>
<text x="205" y="317" transform="rotate(34 205 317)" font-family="Liberation Sans, sans-serif" font-size="8.5" font-weight="400" fill="#858580" letter-spacing="0.5">Calle 54</text>
<text x="5" y="413" transform="rotate(86 5 413)" font-family="Liberation Sans, sans-serif" font-size="8.5" font-weight="400" fill="#858580" letter-spacing="0.5">Carrera 65</text>
<text x="116" y="427" transform="rotate(-67 116 427)" font-family="Liberation Sans, sans-serif" font-size="8.5" font-weight="400" fill="#858580" letter-spacing="0.5">Carrera 50</text>
<text x="101" y="102" transform="rotate(-75 101 102)" font-family="Liberation Sans, sans-serif" font-size="9.5" font-weight="700" fill="#4a4a48" letter-spacing="0.5">Carrera 64C</text>
<text x="117" y="121" transform="rotate(-72.5 117 121)" font-family="Liberation Sans, sans-serif" font-size="9.5" font-weight="700" fill="#4a4a48" letter-spacing="0.5">Carrera 64</text>
<text x="53" y="386" transform="rotate(68 53 386)" font-family="Liberation Sans, sans-serif" font-size="9.5" font-weight="700" fill="#4a4a48" letter-spacing="0.5">Regional</text>
<text x="72" y="452" transform="rotate(72 72 452)" font-family="Liberation Sans, sans-serif" font-size="9.5" font-weight="700" fill="#4a4a48" letter-spacing="0.5">Regional</text>
<text x="37" y="604" transform="rotate(-72 37 604)" font-family="Liberation Sans, sans-serif" font-size="9.5" font-weight="700" fill="#4a4a48" letter-spacing="0.5">Guayabal</text>
<text x="80" y="620" transform="rotate(-84 80 620)" font-family="Liberation Sans, sans-serif" font-size="9.5" font-weight="700" fill="#4a4a48" letter-spacing="0.5">Carrera 48</text>
<text x="371" y="584" transform="rotate(28 371 584)" font-family="Liberation Sans, sans-serif" font-size="9.5" font-weight="700" fill="#4a4a48" letter-spacing="0.5">Tú</text>
<text x="355" y="445" transform="rotate(22 355 445)" font-family="Liberation Sans, sans-serif" font-size="9.5" font-weight="700" fill="#4a4a48" letter-spacing="0.5">Calle</text>
<text x="222" y="307" transform="rotate(-52 222 307)" font-family="Liberation Sans, sans-serif" font-size="9.5" font-weight="700" fill="#4a4a48" letter-spacing="0.5">Carrera 43</text>
<text x="250" y="338" transform="rotate(-57 250 338)" font-family="Liberation Sans, sans-serif" font-size="9.5" font-weight="700" fill="#4a4a48" letter-spacing="0.5">Carrera 39</text>
<text x="150" y="253.5" font-family="Liberation Sans, sans-serif" font-size="9" font-weight="400" fill="#e08a5e" letter-spacing="0.4">Clinica Ces</text>
<text x="-1" y="292" font-family="Liberation Sans, sans-serif" font-size="9" font-weight="400" fill="#4a7bb8" letter-spacing="0.3">ada</text>
<text x="-1" y="306" font-family="Liberation Sans, sans-serif" font-size="9" font-weight="400" fill="#4a7bb8" letter-spacing="0.3">eso</text>
<text x="138" y="6" font-family="Liberation Sans, sans-serif" font-size="8.5" font-weight="400" fill="#4a7bb8" letter-spacing="0.3">Medellin</text>
<path d="M163 346 a11 11 0 1 1 22 0 c0 6.5 -8 11.5 -11 18.7 c-3 -7.2 -11 -12.2 -11 -18.7 z" fill="#dfe3f6" stroke="#6e6e76" stroke-width="1.2"/>
<rect x="316" y="668" width="18" height="10" fill="#fff" stroke="#999" stroke-width="0.6"/>
<rect x="10.3" y="674.1" width="363" height="44" rx="10" ry="10" fill="#ffffff"/>
<text x="18.2" y="691.2" font-family="Liberation Sans, sans-serif" font-size="11.9" fill="#323232"><tspan fill="#1f78c8">Esri</tspan>, HERE, Garmin, FAO, NOAA, USGS, © OpenStreetMap</text>
<text x="18.2" y="711" font-family="Liberation Sans, sans-serif" font-size="11.9" fill="#323232">contributors, and the GIS User Community</text>
<circle cx="360.6" cy="686.4" r="11" fill="#efefef"/>
<circle cx="360.6" cy="686.4" r="7.2" fill="#000"/>
<circle cx="360.6" cy="682.3" r="1.3" fill="#fff"/>
<path d="M358.8 684.8 H361.6 V690.4 H362.6 V691.2 H358.6 V690.4 H359.6 V685.6 H358.8 Z" fill="#fff"/>
</g></svg>
<div class="t" style="left:952.70px;top:956.78px;font-size:14.2px;line-height:14.2px;color:#718096;font-weight:400;">Almacenes asociados</div>
<div style="position:absolute;left:952.4px;top:978.3px;width:1794.3px;height:37.3px;box-sizing:border-box;border:1px solid #cccccc;border-radius:4px;background:#fff"></div>
<div style="position:absolute;left:963px;top:985px;width:91px;height:23.7px;background:#e6e6e6;border-radius:2px"></div>
<div class="t" style="left:969.60px;top:990.64px;font-size:12px;line-height:12px;color:#262626;font-weight:400;">BodegaWL</div>
<svg style="position:absolute;left:1038px;top:992px" width="10" height="10" viewBox="0 0 10 10"><path d="M1.8 1.8 L8.2 8.2 M8.2 1.8 L1.8 8.2" stroke="#111" stroke-width="1.9"/></svg>
<svg style="position:absolute;left:2685px;top:991px" width="12" height="12" viewBox="0 0 12 12"><path d="M1.5 1.5 L10.5 10.5 M10.5 1.5 L1.5 10.5" stroke="#cccccc" stroke-width="1.8"/></svg>
<div style="position:absolute;left:2709px;top:987px;width:1px;height:20px;background:#cccccc"></div>
<svg style="position:absolute;left:2721px;top:992px" width="14" height="10" viewBox="0 0 14 10"><path d="M1.5 2 L7 7.5 L12.5 2" fill="none" stroke="#cccccc" stroke-width="1.8"/></svg>
<div style="position:absolute;left:2698px;top:1128px;width:93px;height:42px;background:#23448f;border-radius:4px"></div>
<div class="t" style="left:2716.00px;top:1141.51px;font-size:15.7px;line-height:15.7px;color:#ffffff;font-weight:400;">Guardar</div>
</body></html>
